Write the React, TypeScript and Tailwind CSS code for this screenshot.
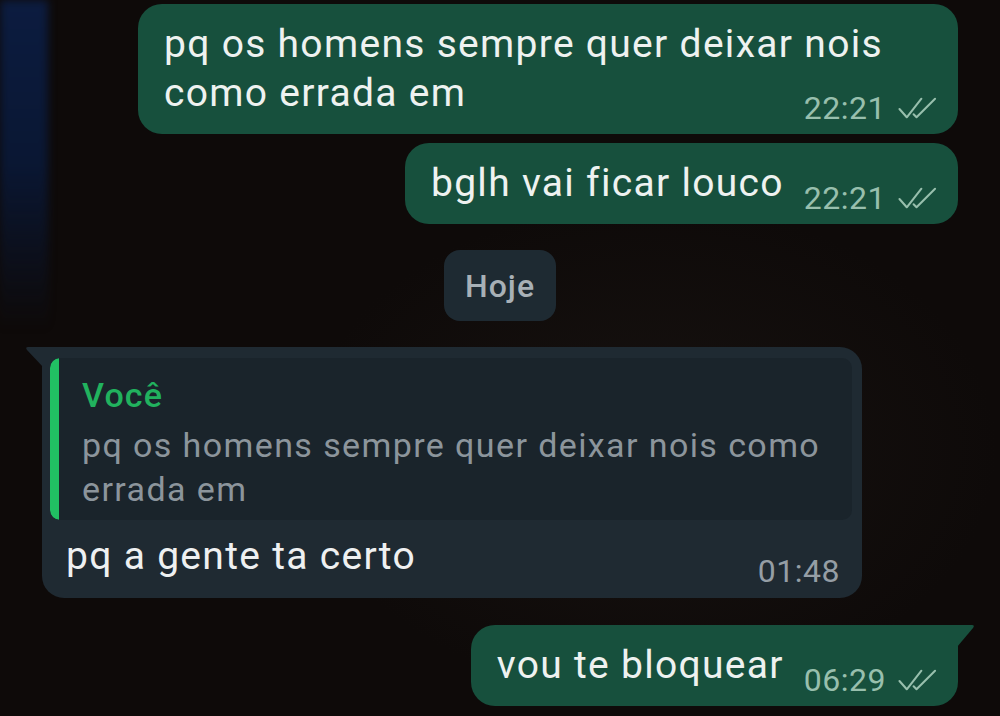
import React from "react";

function Ticks({ color }: { color: string }) {
  return (
    <svg width="39" height="24" viewBox="0 0 40 24" fill="none" stroke={color} strokeWidth="2.1" strokeLinecap="round" strokeLinejoin="round">
      <path d="M1.5 13 L9 21.5 L24 2.5" />
      <path d="M16 18.5 L19 21.5 L38 2.5" />
    </svg>
  );
}

const msgText = "text-[39px] leading-[49px] tracking-[1.3px] text-[#eef2f0] whitespace-nowrap";

function Out({ first, text, time, wide, tail }: { first?: string; text: string; time: string; wide?: boolean; tail?: boolean }) {
  return (
    <div className="relative self-end mr-[42px]">
      <div
        className={
          "flex flex-col bg-[#17503d] pt-[16px] pb-[8px] pl-[26px] pr-[21px] " +
          (tail ? "rounded-[24px] rounded-tr-none " : "rounded-[24px] ") +
          (wide ? "w-[820px]" : "")
        }
      >
        {first && <div className={msgText}>{first}</div>}
        <div className="flex items-end">
          <div className={"flex-1 mb-[8px] " + msgText}>{text}</div>
          <div className="flex items-center gap-[12px] ml-[20px] text-[32px] leading-[36px] tracking-[0.5px] text-[#98bfad]">
            <span>{time}</span>
            <Ticks color="#98bfad" />
          </div>
        </div>
      </div>
      {tail && (
        <svg className="absolute top-0 right-[-17px]" width="18" height="22" viewBox="0 0 18 22">
          <path d="M0 0 L15 0 Q18 0 16 3 L0 22 Z" fill="#17503d" />
        </svg>
      )}
    </div>
  );
}

export default function App() {
  return (
    <div
      className="relative w-[1000px] h-[716px] overflow-hidden bg-[#0e0a09]"
      style={{ fontFamily: "Roboto, 'Noto Sans', sans-serif" }}
    >
      <div className="absolute left-0 top-0 w-[48px] h-[330px] bg-gradient-to-b from-[#0c1c40] via-[#0a1733] to-transparent blur-[4px]" />
      <div className="absolute left-[300px] top-[200px] w-[700px] h-[500px] bg-[radial-gradient(ellipse_at_center,#171210_0%,transparent_70%)]" />
      <div className="relative flex flex-col pt-[4px]">
        <Out wide first="pq os homens sempre quer deixar nois" text="como errada em" time="22:21" />
        <div className="h-[9px]" />
        <Out text="bglh vai ficar louco" time="22:21" />
        <div className="self-center mt-[26px] w-[112px] h-[71px] rounded-[16px] bg-[#1e2a32] flex items-center justify-center text-[32px] tracking-[1px] font-medium text-[#a8b0b6]">
          Hoje
        </div>
        <div className="relative ml-[42px] mt-[26px] w-[820px]">
          <svg className="absolute top-0 left-[-17px]" width="18" height="20" viewBox="0 0 18 20">
            <path d="M18 0 L3 0 Q0 0 2 3 L18 20 Z" fill="#1f2a32" />
          </svg>
          <div className="bg-[#1f2a32] rounded-[22px] rounded-tl-none pt-[11px] pb-[9px] pl-[8px] pr-[10px]">
            <div className="flex bg-[#1a242b] rounded-[10px] overflow-hidden">
              <div className="w-[9px] bg-[#21c063] rounded-l-[10px]" />
              <div className="pl-[23px] pt-[19px] pb-[9px] pr-[10px]">
                <div className="text-[34px] leading-[36px] tracking-[1.2px] font-medium text-[#21b25e]">Você</div>
                <div className="text-[34px] leading-[44px] tracking-[1.4px] text-[#8c959c] mt-[10px] whitespace-nowrap">
                  pq os homens sempre quer deixar nois como<br />errada em
                </div>
              </div>
            </div>
            <div className="flex items-end mt-[12px] pl-[16px] pr-[12px]">
              <div className="flex-1 text-[39px] leading-[49px] tracking-[1.3px] text-[#eef0f1] mb-[8px]">pq a gente ta certo</div>
              <div className="text-[32px] leading-[36px] tracking-[0.5px] text-[#959ea5]">01:48</div>
            </div>
          </div>
        </div>
        <div className="h-[27px]" />
        <Out tail text="vou te bloquear" time="06:29" />
      </div>
    </div>
  );
}
